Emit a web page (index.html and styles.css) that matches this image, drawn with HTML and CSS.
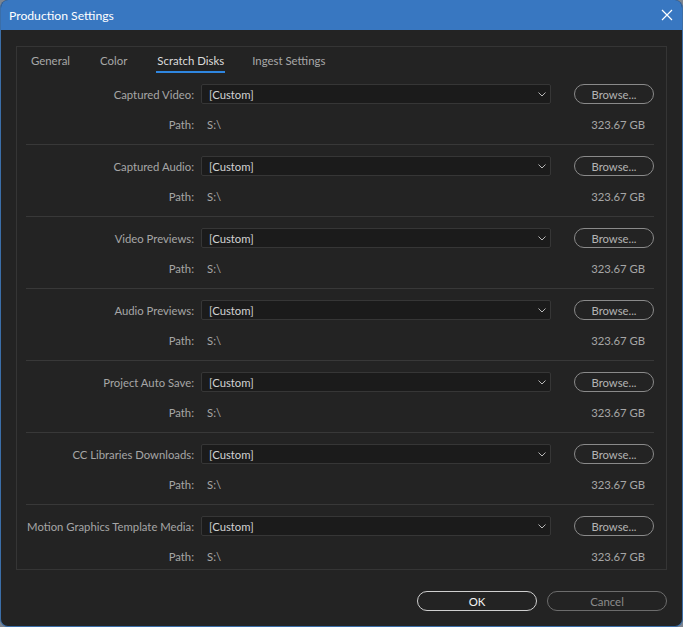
FILE: index.html
```html
<!DOCTYPE html>
<html>
<head>
<meta charset="utf-8">
<link rel="stylesheet" href="styles.css">
</head>
<body>
<div class="window">
  <div class="titlebar">
    <span class="title">Production Settings</span>
    <svg class="close" width="12" height="12" viewBox="0 0 12 12"><path d="M1 1 L11 11 M11 1 L1 11" stroke="#ffffff" stroke-width="1.2" fill="none"/></svg>
  </div>
  <div class="content">
    <div class="panel">
      <div class="tabs">
        <span class="tab">General</span>
        <span class="tab">Color</span>
        <span class="tab active">Scratch Disks</span>
        <span class="tab">Ingest Settings</span>
      </div>
      <div class="sections">
        <div class="section">
          <div class="row">
            <span class="label">Captured Video:</span>
            <div class="select"><span>[Custom]</span><svg class="chev" width="8" height="5" viewBox="0 0 8 5"><path d="M0.5 0.5 L4 4 L7.5 0.5" stroke="#b8b8b8" fill="none" stroke-width="1"/></svg></div>
            <div class="browse">Browse...</div>
          </div>
          <div class="row path"><span class="label">Path:</span><span class="pathval">S:\</span><span class="size">323.67 GB</span></div>
        </div>
        <div class="section">
          <div class="row">
            <span class="label">Captured Audio:</span>
            <div class="select"><span>[Custom]</span><svg class="chev" width="8" height="5" viewBox="0 0 8 5"><path d="M0.5 0.5 L4 4 L7.5 0.5" stroke="#b8b8b8" fill="none" stroke-width="1"/></svg></div>
            <div class="browse">Browse...</div>
          </div>
          <div class="row path"><span class="label">Path:</span><span class="pathval">S:\</span><span class="size">323.67 GB</span></div>
        </div>
        <div class="section">
          <div class="row">
            <span class="label">Video Previews:</span>
            <div class="select"><span>[Custom]</span><svg class="chev" width="8" height="5" viewBox="0 0 8 5"><path d="M0.5 0.5 L4 4 L7.5 0.5" stroke="#b8b8b8" fill="none" stroke-width="1"/></svg></div>
            <div class="browse">Browse...</div>
          </div>
          <div class="row path"><span class="label">Path:</span><span class="pathval">S:\</span><span class="size">323.67 GB</span></div>
        </div>
        <div class="section">
          <div class="row">
            <span class="label">Audio Previews:</span>
            <div class="select"><span>[Custom]</span><svg class="chev" width="8" height="5" viewBox="0 0 8 5"><path d="M0.5 0.5 L4 4 L7.5 0.5" stroke="#b8b8b8" fill="none" stroke-width="1"/></svg></div>
            <div class="browse">Browse...</div>
          </div>
          <div class="row path"><span class="label">Path:</span><span class="pathval">S:\</span><span class="size">323.67 GB</span></div>
        </div>
        <div class="section">
          <div class="row">
            <span class="label">Project Auto Save:</span>
            <div class="select"><span>[Custom]</span><svg class="chev" width="8" height="5" viewBox="0 0 8 5"><path d="M0.5 0.5 L4 4 L7.5 0.5" stroke="#b8b8b8" fill="none" stroke-width="1"/></svg></div>
            <div class="browse">Browse...</div>
          </div>
          <div class="row path"><span class="label">Path:</span><span class="pathval">S:\</span><span class="size">323.67 GB</span></div>
        </div>
        <div class="section">
          <div class="row">
            <span class="label">CC Libraries Downloads:</span>
            <div class="select"><span>[Custom]</span><svg class="chev" width="8" height="5" viewBox="0 0 8 5"><path d="M0.5 0.5 L4 4 L7.5 0.5" stroke="#b8b8b8" fill="none" stroke-width="1"/></svg></div>
            <div class="browse">Browse...</div>
          </div>
          <div class="row path"><span class="label">Path:</span><span class="pathval">S:\</span><span class="size">323.67 GB</span></div>
        </div>
        <div class="section last">
          <div class="row">
            <span class="label">Motion Graphics Template Media:</span>
            <div class="select"><span>[Custom]</span><svg class="chev" width="8" height="5" viewBox="0 0 8 5"><path d="M0.5 0.5 L4 4 L7.5 0.5" stroke="#b8b8b8" fill="none" stroke-width="1"/></svg></div>
            <div class="browse">Browse...</div>
          </div>
          <div class="row path"><span class="label">Path:</span><span class="pathval">S:\</span><span class="size">323.67 GB</span></div>
        </div>
      </div>
    </div>
    <div class="footer">
      <div class="btn ok">OK</div>
      <div class="btn cancel">Cancel</div>
    </div>
  </div>
</div>
</body>
</html>
```

FILE: styles.css
```css
html, body {
  margin: 0;
  padding: 0;
  background: #7d8590;
}
.window {
  width: 683px;
  height: 627px;
  box-sizing: border-box;
  border: 1px solid #3b6ea8;
  border-top: none;
  border-radius: 8px 8px 8px 8px;
  overflow: hidden;
  background: #232323;
  font-family: Lato, "Noto Sans", sans-serif;
  font-size: 11.3px;
  color: #a6a6a6;
  display: flex;
  flex-direction: column;
}
.titlebar {
  height: 30px;
  flex: none;
  background: #3877c1;
  display: flex;
  align-items: center;
  justify-content: space-between;
  padding: 0 10px 0 9px;
  margin: 0 -1px;
}
.title {
  color: #ffffff;
  font-size: 12.2px;
}
.close {
  display: block;
}
.content {
  padding: 16px 15px 0 15px;
  display: flex;
  flex-direction: column;
}
.panel {
  border: 1px solid #353535;
  height: 524px;
  box-sizing: border-box;
  display: flex;
  flex-direction: column;
}
.tabs {
  display: flex;
  height: 26px;
  flex: none;
  font-size: 11.4px;
}
.tab {
  padding: 0 15px;
  display: flex;
  align-items: center;
  height: 26px;
  box-sizing: border-box;
  color: #a8a8a8;
  position: relative;
  padding-top: 1px;
}
.tab:first-child {
  padding-left: 14px;
}
.tab:last-child {
  padding-left: 13px;
}
.tab.active {
  color: #dcdcdc;
}
.tab.active::after {
  content: "";
  position: absolute;
  left: 14px;
  right: 14px;
  bottom: 0;
  height: 2px;
  background: #2f86e0;
}
.sections {
  padding: 0 12px 0 9px;
}
.section {
  border-bottom: 1px solid #383838;
  padding: 11px 0 10px 0;
  display: flex;
  flex-direction: column;
  gap: 10px;
}
.section.last {
  border-bottom: none;
  padding-bottom: 0;
}
.row {
  display: flex;
  align-items: center;
  height: 20px;
}
.label {
  width: 168px;
  text-align: right;
  flex: none;
  white-space: nowrap;
}
.select {
  margin-left: 7px;
  width: 350px;
  height: 20px;
  box-sizing: border-box;
  background: #1b1b1b;
  border: 1px solid #363636;
  border-radius: 2px;
  display: flex;
  align-items: center;
  justify-content: space-between;
  padding: 0 4px 0 7px;
  color: #d2d2d2;
  flex: none;
}
.chev {
  display: block;
}
.browse {
  margin-left: 23px;
  width: 80px;
  height: 20px;
  box-sizing: border-box;
  border: 1px solid #8a8a8a;
  border-radius: 10px;
  display: flex;
  align-items: center;
  justify-content: center;
  color: #b3b3b3;
  flex: none;
}
.pathval {
  margin-left: 13px;
  flex: 1;
}
.size {
  margin-right: 9px;
}
.footer {
  display: flex;
  justify-content: flex-end;
  gap: 10px;
  padding-top: 21px;
}
.btn {
  width: 120px;
  height: 20px;
  box-sizing: border-box;
  border-radius: 10px;
  display: flex;
  align-items: center;
  justify-content: center;
  font-size: 11.4px;
}
.btn.ok {
  border: 1px solid #cfcfcf;
  color: #f2f2f2;
}
.btn.cancel {
  border: 1px solid #6c6c6c;
  color: #8c8c8c;
}
```
